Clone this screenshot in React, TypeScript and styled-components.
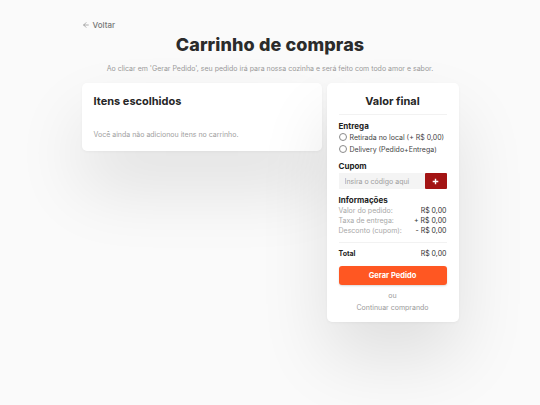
import React, { useState } from "react";
import styled, { createGlobalStyle } from "styled-components";

const GlobalStyle = createGlobalStyle`
  html, body {
    margin: 0;
    padding: 0;
    background: #fafafa;
    font-family: "Inter", "Open Sans", sans-serif;
    color: #222;
  }
  body { min-height: 405px; }
  * { box-sizing: border-box; }
`;

const Page = styled.div`
  width: 377px;
  margin: 0 auto;
  padding-top: 20px;
`;

const BackLink = styled.a`
  display: flex;
  align-items: center;
  gap: 3px;
  font-size: 8px;
  color: #777;
  text-decoration: none;
  font-weight: 500;
`;

const Title = styled.h1`
  margin: 4px 0 0;
  text-align: center;
  font-size: 18px;
  font-weight: 800;
  color: #2b2b2b;
  letter-spacing: 0.1px;
`;

const Subtitle = styled.p`
  margin: 9px 0 0;
  text-align: center;
  font-size: 7px;
  color: #9a9a9a;
`;

const Columns = styled.div`
  display: flex;
  align-items: flex-start;
  gap: 5px;
  margin-top: 10px;
`;

const Card = styled.div<{ $width: number }>`
  width: ${(p) => p.$width}px;
  background: #fff;
  border-radius: 5px;
  box-shadow: 0 36px 70px rgba(0, 0, 0, 0.11), 0 1px 3px rgba(0, 0, 0, 0.04);
`;

const ItemsCard = styled(Card)`
  padding: 11px 12px 13px;
  height: 68px;
`;

const CardTitle = styled.h2<{ $center?: boolean }>`
  margin: 0;
  font-size: 11px;
  font-weight: 700;
  color: #262626;
  text-align: ${(p) => (p.$center ? "center" : "left")};
`;

const EmptyText = styled.p`
  margin: 22px 0 0;
  font-size: 7px;
  color: #a0a0a0;
`;

const SummaryCard = styled(Card)`
  padding: 11px 12px 10px;
`;

const Divider = styled.div<{ $mt: number; $mb: number }>`
  height: 1px;
  background: #f2f2f2;
  margin: ${(p) => p.$mt}px 0 ${(p) => p.$mb}px;
`;

const Label = styled.div`
  font-size: 8px;
  font-weight: 700;
  color: #222;
`;

const RadioRow = styled.label`
  display: flex;
  align-items: center;
  gap: 3px;
  font-size: 7px;
  color: #444;
  height: 12px;
`;

const RadioCircle = styled.span`
  width: 8px;
  height: 8px;
  border: 1px solid #8a8a8a;
  border-radius: 50%;
  display: inline-block;
`;

const Section = styled.div<{ $mt: number }>`
  margin-top: ${(p) => p.$mt}px;
`;

const CouponRow = styled.div`
  display: flex;
  height: 16px;
  margin-top: 2px;
`;

const CouponInput = styled.input`
  flex: 1;
  min-width: 0;
  border: none;
  background: #f4f4f4;
  font-family: inherit;
  font-size: 7px;
  padding: 0 6px;
  outline: none;
  color: #333;
  &::placeholder { color: #9d9d9d; }
`;

const AddButton = styled.button`
  width: 22px;
  border: none;
  background: #a31414;
  color: #fff;
  border-radius: 1px;
  display: flex;
  align-items: center;
  justify-content: center;
  padding: 0;
`;

const InfoRow = styled.div<{ $bold?: boolean }>`
  display: flex;
  justify-content: space-between;
  font-size: 7px;
  height: 10px;
  line-height: 10px;
  color: ${(p) => (p.$bold ? "#222" : "#a8a8a8")};
  font-weight: ${(p) => (p.$bold ? 700 : 400)};
`;

const Value = styled.span<{ $plain?: boolean }>`
  color: #333;
  font-weight: ${(p) => (p.$plain ? 400 : "inherit")};
`;

const OrderButton = styled.button`
  width: 100%;
  height: 19px;
  margin-top: 7px;
  border: none;
  border-radius: 3px;
  background: #ff5722;
  color: #fff;
  font-family: inherit;
  font-size: 7.5px;
  font-weight: 700;
  box-shadow: 0 1px 2px rgba(0, 0, 0, 0.15);
`;

const Muted = styled.div<{ $mt: number }>`
  margin-top: ${(p) => p.$mt}px;
  text-align: center;
  font-size: 7px;
  color: #9a9a9a;
`;

export default function App() {
  const [coupon, setCoupon] = useState("");

  return (
    <>
      <GlobalStyle />
      <Page>
        <BackLink href="#">
          <svg width="8" height="8" viewBox="0 0 24 24" fill="none" stroke="#888" strokeWidth="2" strokeLinecap="round" strokeLinejoin="round">
            <path d="M19 12H5M12 19l-7-7 7-7" />
          </svg>
          Voltar
        </BackLink>
        <Title>Carrinho de compras</Title>
        <Subtitle>
          Ao clicar em 'Gerar Pedido', seu pedido irá para nossa cozinha e será feito com todo amor e sabor.
        </Subtitle>

        <Columns>
          <ItemsCard $width={240}>
            <CardTitle>Itens escolhidos</CardTitle>
            <EmptyText>Você ainda não adicionou itens no carrinho.</EmptyText>
          </ItemsCard>

          <SummaryCard $width={132}>
            <CardTitle $center>Valor final</CardTitle>
            <Divider $mt={6} $mb={6} />

            <Label>Entrega</Label>
            <RadioRow>
              <RadioCircle />
              Retirada no local (+ R$ 0,00)
            </RadioRow>
            <RadioRow>
              <RadioCircle />
              Delivery (Pedido+Entrega)
            </RadioRow>

            <Section $mt={6}>
              <Label>Cupom</Label>
              <CouponRow>
                <CouponInput
                  placeholder="Insira o código aqui"
                  value={coupon}
                  onChange={(e) => setCoupon(e.target.value)}
                />
                <AddButton>
                  <svg width="7" height="7" viewBox="0 0 10 10">
                    <path d="M5 1v8M1 5h8" stroke="#fff" strokeWidth="2" />
                  </svg>
                </AddButton>
              </CouponRow>
            </Section>

            <Section $mt={6}>
              <Label>Informações</Label>
              <InfoRow style={{ marginTop: 1 }}>
                <span>Valor do pedido:</span>
                <Value>R$ 0,00</Value>
              </InfoRow>
              <InfoRow>
                <span>Taxa de entrega:</span>
                <Value>+ R$ 0,00</Value>
              </InfoRow>
              <InfoRow>
                <span>Desconto (cupom):</span>
                <Value>- R$ 0,00</Value>
              </InfoRow>
            </Section>

            <Divider $mt={6} $mb={6} />
            <InfoRow $bold>
              <span>Total</span>
              <Value $plain>R$ 0,00</Value>
            </InfoRow>

            <OrderButton>Gerar Pedido</OrderButton>
            <Muted $mt={6}>ou</Muted>
            <Muted $mt={3}>Continuar comprando</Muted>
          </SummaryCard>
        </Columns>
      </Page>
    </>
  );
}
